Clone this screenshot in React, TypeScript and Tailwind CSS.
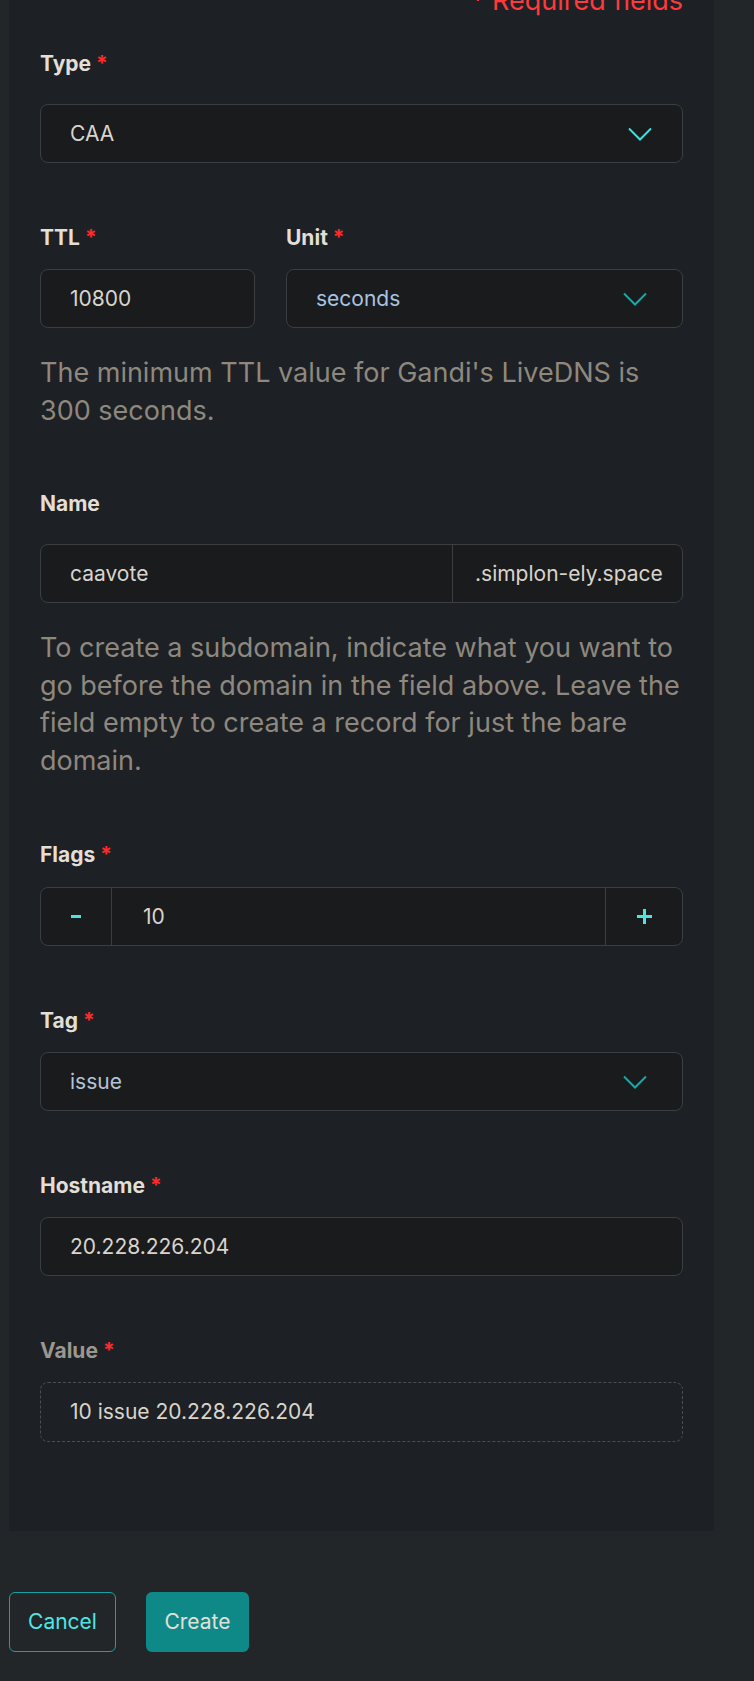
import React from 'react';

function Label({
  children,
  required = true,
  muted = false,
  className = '',
}: {
  children: React.ReactNode;
  required?: boolean;
  muted?: boolean;
  className?: string;
}) {
  return (
    <div
      className={`text-[21px] leading-[28px] font-bold ${muted ? 'text-[#9b978f]' : 'text-[#e3ded6]'} ${className}`}
    >
      {children}
      {required && <span className="text-[#ff2b2b]"> *</span>}
    </div>
  );
}

function Chevron({ bright = false }: { bright?: boolean }) {
  return (
    <svg
      width="24"
      height="14"
      viewBox="0 0 24 14"
      fill="none"
      className={bright ? 'text-[#3fe0e0]' : 'text-[#18a8a8]'}
    >
      <path d="M1 1.5 L12 12.5 L23 1.5" stroke="currentColor" strokeWidth="2" />
    </svg>
  );
}

function Select({ value, bright = false, valueClass = 'text-[#d9d4cc]' }: { value: string; bright?: boolean; valueClass?: string }) {
  return (
    <div
      className={`flex items-center justify-between h-[59px] rounded-[8px] border border-[#3b3e42] bg-[#1a1b1d] pl-[29px] ${bright ? 'pr-[30px]' : 'pr-[35px]'}`}
    >
      <span className={`text-[21px] ${valueClass}`}>{value}</span>
      <Chevron bright={bright} />
    </div>
  );
}

function Help({ children }: { children: React.ReactNode }) {
  return <p className="mt-[26px] text-[27px] leading-[37.5px] text-[#8e887e]">{children}</p>;
}

export default function App() {
  return (
    <div className="min-h-[1681px] overflow-hidden bg-[#232629] pl-[9px] pr-[40px] font-[Inter,sans-serif]">
      {/* Record form panel */}
      <div className="flow-root bg-[#1d2024] px-[31px] pb-[89px]">
        <div className="-mt-[18px] text-right text-[27px] leading-[37px] text-[#ff3a3a]">* Required fields</div>

        <Label className="mt-[31px]">Type</Label>
        <div className="mt-[26px]">
          <Select value="CAA" bright />
        </div>

        <div className="mt-[61px] grid grid-cols-[215px_1fr] gap-x-[31px]">
          <Label>TTL</Label>
          <Label>Unit</Label>
          <div className="mt-[17px] flex h-[59px] items-center rounded-[8px] border border-[#3b3e42] bg-[#1a1b1d] pl-[29px] text-[21px] text-[#d9d4cc]">
            10800
          </div>
          <div className="mt-[17px]">
            <Select value="seconds" valueClass="text-[#a9c3e2]" />
          </div>
        </div>
        <Help>The minimum TTL value for Gandi's LiveDNS is 300 seconds.</Help>

        <Label className="mt-[61px]" required={false}>
          Name
        </Label>
        <div className="mt-[26px] flex h-[59px] rounded-[8px] border border-[#3b3e42] bg-[#1a1b1d] text-[21px] text-[#d9d4cc]">
          <div className="flex flex-1 items-center pl-[29px]">caavote</div>
          <div className="flex w-[230px] items-center border-l border-[#3b3e42] pl-[22px]">.simplon-ely.space</div>
        </div>
        <Help>
          To create a subdomain, indicate what you want to go before the domain in the field above. Leave the field
          empty to create a record for just the bare domain.
        </Help>

        <Label className="mt-[62px]">Flags</Label>
        <div className="mt-[18px] flex h-[59px] rounded-[8px] border border-[#3b3e42] bg-[#1a1b1d]">
          <div className="flex w-[71px] items-center justify-center border-r border-[#3b3e42]">
            <svg width="10" height="3" viewBox="0 0 10 3">
              <rect width="10" height="3" fill="#4ee3e3" />
            </svg>
          </div>
          <div className="flex flex-1 items-center pl-[31px] text-[21px] text-[#d9d4cc]">10</div>
          <div className="flex w-[77px] items-center justify-center border-l border-[#3b3e42]">
            <svg width="15" height="15" viewBox="0 0 15 15">
              <rect x="0" y="6" width="15" height="3" fill="#4ee3e3" />
              <rect x="6" y="0" width="3" height="15" fill="#4ee3e3" />
            </svg>
          </div>
        </div>

        <Label className="mt-[61px]">Tag</Label>
        <div className="mt-[17px]">
          <Select value="issue" valueClass="text-[#b4c4d6]" />
        </div>

        <Label className="mt-[61px]">Hostname</Label>
        <div className="mt-[17px] flex h-[59px] items-center rounded-[8px] border border-[#3b3e42] bg-[#1a1b1d] pl-[29px] text-[21px] text-[#d9d4cc]">
          20.228.226.204
        </div>

        <Label className="mt-[61px]" muted>
          Value
        </Label>
        <div className="mt-[17px] flex h-[60px] items-center rounded-[8px] border border-dashed border-[#4a4d51] pl-[29px] text-[21px] text-[#d9d4cc]">
          10 issue 20.228.226.204
        </div>
      </div>

      {/* Actions */}
      <div className="mt-[61px] flex gap-[30px]">
        <button className="h-[60px] w-[107px] rounded-[6px] border border-[#14a3a3] text-[21px] text-[#4ee6e6]">
          Cancel
        </button>
        <button className="h-[60px] w-[103px] rounded-[6px] bg-[#0f8987] text-[21px] text-[#e3e0d8]">Create</button>
      </div>
    </div>
  );
}
